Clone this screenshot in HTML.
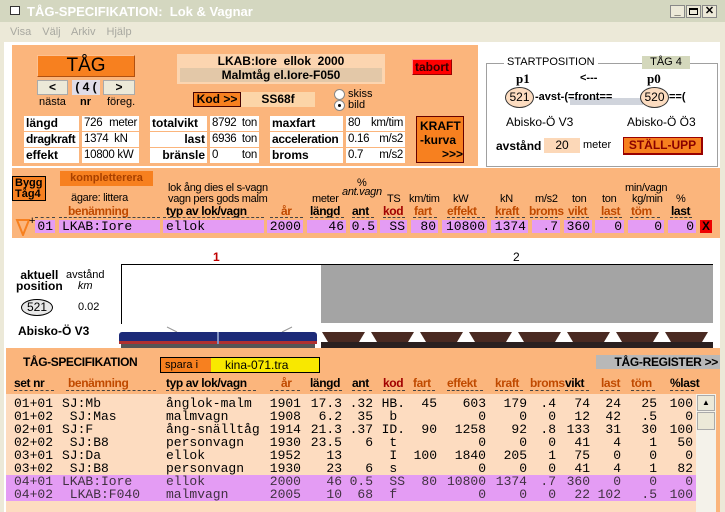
<!DOCTYPE html>
<html><head><meta charset="utf-8"><style>
*{margin:0;padding:0;box-sizing:border-box}
body{width:725px;height:512px;overflow:hidden;background:#fff;font-family:"Liberation Sans",sans-serif;font-size:12px;color:#000;position:relative}
.a{position:absolute;white-space:nowrap}
.b{font-weight:bold}
.cell{position:absolute;background:#fff;height:15px;line-height:15px;padding:0 2px;font-size:12px;white-space:nowrap;overflow:hidden;display:flex;justify-content:space-between}
.v{font-size:11.5px;letter-spacing:-0.3px}
.r{position:absolute;left:0;width:725px;height:13px;line-height:13px}
.r i{font-style:normal;position:absolute;top:0;font-family:"Liberation Mono",monospace;font-size:13px;white-space:pre}
.hd{position:absolute;top:376px;font-weight:bold;font-size:12px;letter-spacing:-0.4px}
.br{color:#c04a00}
.pc{position:absolute;top:220px;height:13px;line-height:13px;background:#e49cf4;font-family:"Liberation Mono",monospace;font-size:13px;text-align:right;padding-right:2px;white-space:pre}
.mh{position:absolute;font-size:11px;letter-spacing:-0.3px;white-space:nowrap}
.mb{position:absolute;top:204px;font-weight:bold;font-size:12px;letter-spacing:-0.4px;white-space:nowrap}
.dash{position:absolute;height:0;border-top:1px dashed #444}
</style></head><body>
<!-- title bar -->
<div class="a" style="left:0;top:0;width:725px;height:22px;background:#d4d7c0"></div>
<div class="a" style="left:10px;top:6px;width:10px;height:9px;border:1px solid #333;background:#fff"></div>
<div class="a b" style="left:27px;top:4px;font-size:13px;color:#fff">TÅG-SPECIFIKATION:&nbsp; Lok &amp; Vagnar</div>
<div class="a b" style="left:670px;top:5px;width:15px;height:13px;background:#ece9d8;border:1px solid #888;font-size:11px;line-height:11px;text-align:center">_</div>
<div class="a" style="left:686px;top:5px;width:15px;height:13px;background:#ece9d8;border:1px solid #888"><div style="margin:2px;width:9px;height:7px;border:1px solid #000;border-top-width:2px"></div></div>
<div class="a b" style="left:702px;top:5px;width:15px;height:13px;background:#ece9d8;border:1px solid #888;font-size:11px;line-height:11px;text-align:center">✕</div>
<!-- menu -->
<div class="a" style="left:0;top:22px;width:725px;height:20px;background:#ece9d8"></div>
<div class="a" style="left:10px;top:26px;color:#a8a8a0;font-size:11px;word-spacing:8px">Visa Välj Arkiv Hjälp</div>
<div class="a" style="left:0;top:42px;width:4px;height:470px;background:#ece9d8"></div>
<div class="a" style="left:720px;top:42px;width:5px;height:470px;background:#ece9d8"></div>

<!-- top orange panel -->
<div class="a" style="left:12px;top:45px;width:466px;height:121px;background:#fbb57c"></div>
<div class="a" style="left:37px;top:55px;width:98px;height:22px;background:#f7801f;border:1px solid #b05010;border-top-color:#fdc090;border-left-color:#fdc090;font-size:19px;line-height:20px;text-align:center">TÅG</div>
<div class="a b" style="left:37px;top:80px;width:31px;height:15px;background:#ece9d8;border:1px solid #aaa;text-align:center;line-height:13px">&lt;</div>
<div class="a b" style="left:72px;top:80px;width:28px;height:15px;background:#e0dde8;text-align:center;line-height:15px">( 4 (</div>
<div class="a b" style="left:103px;top:80px;width:32px;height:15px;background:#ece9d8;border:1px solid #aaa;text-align:center;line-height:13px">&gt;</div>
<div class="a" style="left:39px;top:96px;font-size:11px">nästa</div>
<div class="a b" style="left:80px;top:96px;font-size:11px">nr</div>
<div class="a" style="left:107px;top:96px;font-size:11px">föreg.</div>

<div class="a" style="left:177px;top:54px;width:208px;height:30px;background:#fcd5b0"></div>
<div class="a b" style="left:177px;top:54px;width:208px;text-align:center;font-size:12px">LKAB:Iore&nbsp; ellok&nbsp; 2000</div>
<div class="a b" style="left:180px;top:68px;width:202px;height:14px;background:#e3c8a8;text-align:center;font-size:12px;line-height:14px">Malmtåg el.Iore-F050</div>
<div class="a b" style="left:412px;top:59px;width:40px;height:16px;background:#f00;border:1px solid #900;border-top-color:#f88;border-left-color:#f88;font-size:12px;line-height:14px;text-align:center;color:#300">tabort</div>
<div class="a b" style="left:193px;top:92px;width:48px;height:15px;background:#f7801f;border:1px solid #400;line-height:13px;text-align:center">Kod &gt;&gt;</div>
<div class="a b" style="left:241px;top:92px;width:74px;height:15px;background:#fcd5a8;line-height:15px;text-align:center">SS68f</div>
<div class="a" style="left:334px;top:89px;width:11px;height:11px;border-radius:50%;background:#fff;border:1px solid #888"></div>
<div class="a" style="left:334px;top:100px;width:11px;height:11px;border-radius:50%;background:#fff;border:1px solid #888"><div style="margin:3px;width:3px;height:3px;background:#000;border-radius:50%"></div></div>
<div class="a" style="left:348px;top:88px;font-size:11px">skiss</div>
<div class="a" style="left:348px;top:99px;font-size:11px">bild</div>

<div class="cell b" style="left:24px;top:116px;width:55px">längd</div>
<div class="cell v" style="left:82px;top:116px;width:57px"><span>726</span><span>meter</span></div>
<div class="cell b" style="left:150px;top:116px;width:57px">totalvikt</div>
<div class="cell v" style="left:210px;top:116px;width:49px"><span>8792</span><span>ton</span></div>
<div class="cell b" style="left:270px;top:116px;width:73px">maxfart</div>
<div class="cell v" style="left:346px;top:116px;width:59px"><span>80</span><span>km/tim</span></div>
<div class="cell b" style="left:24px;top:132px;width:55px;letter-spacing:-0.3px">dragkraft</div>
<div class="cell v" style="left:82px;top:132px;width:57px"><span>1374&nbsp; kN</span></div>
<div class="cell b" style="left:150px;top:132px;width:57px;justify-content:flex-end">last</div>
<div class="cell v" style="left:210px;top:132px;width:49px"><span>6936</span><span>ton</span></div>
<div class="cell b" style="left:270px;top:132px;width:73px;letter-spacing:-0.3px">acceleration</div>
<div class="cell v" style="left:346px;top:132px;width:59px"><span>0.16</span><span>m/s2</span></div>
<div class="cell b" style="left:24px;top:148px;width:55px">effekt</div>
<div class="cell v" style="left:82px;top:148px;width:57px"><span>10800 kW</span></div>
<div class="cell b" style="left:150px;top:148px;width:57px;justify-content:flex-end">bränsle</div>
<div class="cell v" style="left:210px;top:148px;width:49px"><span>0</span><span>ton</span></div>
<div class="cell b" style="left:270px;top:148px;width:73px">broms</div>
<div class="cell v" style="left:346px;top:148px;width:59px"><span>0.7</span><span>m/s2</span></div>
<div class="a b" style="left:416px;top:116px;width:48px;height:47px;background:#f7801f;border:1px solid #600;font-size:12px;line-height:14px;padding:2px 0 0 3px">KRAFT<br>-kurva<br><span style="padding-left:22px">&gt;&gt;&gt;</span></div>

<!-- startposition -->
<div class="a" style="left:486px;top:63px;width:232px;height:104px;border:1px solid #a0a0a0"></div>
<div class="a" style="left:504px;top:56px;background:#fff;padding:0 3px;font-size:11px">STARTPOSITION</div>
<div class="a" style="left:642px;top:56px;width:48px;height:13px;background:#d4d8bc;font-size:11px;text-align:center;line-height:13px">TÅG 4</div>
<div class="a b" style="left:516px;top:71px;font-family:'Liberation Serif',serif;font-size:13px">p1</div>
<div class="a b" style="left:580px;top:72px;font-size:11px">&lt;---</div>
<div class="a b" style="left:647px;top:71px;font-family:'Liberation Serif',serif;font-size:13px">p0</div>
<div class="a" style="left:570px;top:98px;width:73px;height:7px;background:#d0d4dc"></div>
<div class="a" style="left:505px;top:87px;width:29px;height:21px;border-radius:50%;background:#fcdcc0;border:1px solid #333;text-align:center;line-height:19px;font-size:12px">521</div>
<div class="a b" style="left:535px;top:91px;font-size:11px">-avst-(=front==</div>
<div class="a" style="left:640px;top:87px;width:29px;height:21px;border-radius:50%;background:#fcdcc0;border:1px solid #333;text-align:center;line-height:19px;font-size:12px">520</div>
<div class="a b" style="left:669px;top:91px;font-size:11px">==(</div>
<div class="a" style="left:506px;top:115px;font-size:12px">Abisko-Ö V3</div>
<div class="a" style="left:627px;top:115px;font-size:12px">Abisko-Ö Ö3</div>
<div class="a b" style="left:496px;top:139px;font-size:12px">avstånd</div>
<div class="a" style="left:544px;top:138px;width:36px;height:15px;background:#fcd8b8;text-align:center;line-height:15px">20</div>
<div class="a" style="left:583px;top:139px;font-size:11px">meter</div>
<div class="a b" style="left:623px;top:137px;width:80px;height:18px;background:#f7801f;border:1px solid #900;border-right-width:2px;border-bottom-width:2px;text-align:center;line-height:15px;color:#800;font-size:12px">STÄLL-UPP</div>

<!-- middle band -->
<div class="a" style="left:12px;top:168px;width:708px;height:70px;background:#fbb57c"></div>
<div class="a b" style="left:12px;top:176px;width:34px;height:25px;background:#f7801f;border:1px solid #000;font-size:11px;line-height:11px;padding:1px 0 0 2px">Bygg<br>Tåg4</div>
<div class="a b" style="left:60px;top:171px;width:93px;height:15px;background:#f7801f;color:#a84000;text-align:center;font-size:11px;line-height:14px">kompletterera</div>
<div class="mh" style="left:71px;top:192px">ägare: littera</div>
<div class="mh" style="left:168px;top:182px">lok ång dies el s-vagn</div>
<div class="mh" style="left:168px;top:193px">vagn pers gods malm</div>
<div class="mh" style="left:312px;top:193px">meter</div>
<div class="mh" style="left:357px;top:177px">%</div>
<div class="mh" style="left:342px;top:186px;font-style:italic;width:43px;overflow:hidden">ant.vagn</div>
<div class="mh" style="left:387px;top:193px">TS</div>
<div class="mh" style="left:409px;top:193px">km/tim</div>
<div class="mh" style="left:453px;top:193px">kW</div>
<div class="mh" style="left:500px;top:193px">kN</div>
<div class="mh" style="left:535px;top:193px">m/s2</div>
<div class="mh" style="left:572px;top:193px">ton</div>
<div class="mh" style="left:602px;top:193px">ton</div>
<div class="mh" style="left:625px;top:182px">min/vagn</div>
<div class="mh" style="left:632px;top:193px">kg/min</div>
<div class="mh" style="left:676px;top:193px">%</div>
<div class="mb br" style="left:68px">benämning</div>
<div class="mb" style="left:166px">typ av lok/vagn</div>
<div class="mb br" style="left:281px">år</div>
<div class="mb" style="left:310px">längd</div>
<div class="mb" style="left:352px">ant</div>
<div class="mb" style="left:383px;color:#a00000">kod</div>
<div class="mb br" style="left:414px">fart</div>
<div class="mb br" style="left:447px">effekt</div>
<div class="mb br" style="left:495px">kraft</div>
<div class="mb br" style="left:529px">broms</div>
<div class="mb br" style="left:568px">vikt</div>
<div class="mb br" style="left:601px">last</div>
<div class="mb br" style="left:631px">töm</div>
<div class="mb" style="left:671px">last</div>
<div class="dash" style="left:35px;top:217px;width:20px"></div>
<div class="dash" style="left:59px;top:217px;width:101px"></div>
<div class="dash" style="left:163px;top:217px;width:101px"></div>
<div class="dash" style="left:270px;top:217px;width:33px"></div>
<div class="dash" style="left:310px;top:217px;width:34px"></div>
<div class="dash" style="left:352px;top:217px;width:22px"></div>
<div class="dash" style="left:383px;top:217px;width:22px"></div>
<div class="dash" style="left:413px;top:217px;width:24px"></div>
<div class="dash" style="left:447px;top:217px;width:38px"></div>
<div class="dash" style="left:495px;top:217px;width:30px"></div>
<div class="dash" style="left:530px;top:217px;width:28px"></div>
<div class="dash" style="left:567px;top:217px;width:22px"></div>
<div class="dash" style="left:600px;top:217px;width:22px"></div>
<div class="dash" style="left:630px;top:217px;width:30px"></div>
<div class="dash" style="left:670px;top:217px;width:22px"></div>
<svg class="a" style="left:15px;top:214px" width="20" height="22"><polygon points="2,6 14,6 8,21" fill="none" stroke="#f7801f" stroke-width="2"/><text x="14" y="10" font-size="11" font-family="Liberation Sans">+</text></svg>
<div class="pc" style="left:35px;width:20px">01</div>
<div class="pc" style="left:59px;width:101px;text-align:left;padding-left:3px">LKAB:Iore</div>
<div class="pc" style="left:163px;width:101px;text-align:left;padding-left:3px">ellok</div>
<div class="pc" style="left:267px;width:36px">2000</div>
<div class="pc" style="left:307px;width:39px">46</div>
<div class="pc" style="left:350px;width:27px">0.5</div>
<div class="pc" style="left:380px;width:27px">SS</div>
<div class="pc" style="left:411px;width:27px">80</div>
<div class="pc" style="left:442px;width:45px">10800</div>
<div class="pc" style="left:491px;width:37px">1374</div>
<div class="pc" style="left:532px;width:28px">.7</div>
<div class="pc" style="left:564px;width:28px">360</div>
<div class="pc" style="left:595px;width:29px">0</div>
<div class="pc" style="left:628px;width:36px">0</div>
<div class="pc" style="left:668px;width:28px">0</div>
<div class="a b" style="left:700px;top:220px;width:12px;height:13px;background:#e00;color:#000;font-size:12px;line-height:13px;text-align:center">X</div>

<!-- position area -->
<div class="a b" style="left:213px;top:250px;color:#c00000;font-size:12px">1</div>
<div class="a" style="left:513px;top:250px;font-size:12px">2</div>
<div class="a" style="left:507px;top:263px;font-size:12px">100</div>
<div class="a" style="left:121px;top:264px;width:592px;height:60px;border-top:1px solid #000;border-left:1px solid #000"></div>
<div class="a" style="left:321px;top:265px;width:392px;height:58px;background:#a4a4a4"></div>
<div class="a b" style="left:16px;top:270px;font-size:12px;line-height:11px;text-align:center">aktuell<br>position</div>
<div class="a" style="left:66px;top:270px;font-size:11px;line-height:11px;text-align:center">avstånd<br><i>km</i></div>
<div class="a" style="left:21px;top:299px;width:32px;height:17px;border-radius:50%;background:#e8e8e8;border:1px solid #000;text-align:center;line-height:15px;font-size:12px">521</div>
<div class="a" style="left:78px;top:301px;font-size:11px">0.02</div>
<div class="a b" style="left:18px;top:324px;font-size:12px">Abisko-Ö V3</div>
<svg class="a" style="left:117px;top:326px" width="600" height="23">
<line x1="50" y1="1" x2="60" y2="6" stroke="#999"/><line x1="175" y1="1" x2="165" y2="6" stroke="#999"/>
<rect x="2" y="6" width="198" height="12" rx="3" fill="#1c2a78"/>
<rect x="2" y="15" width="198" height="3" fill="#b03030"/>
<rect x="100" y="6" width="2" height="12" fill="#8090c0"/>
<rect x="4" y="18" width="194" height="4" fill="#555"/>
<g fill="#4a2a22">
<polygon points="205,6 248,6 242,16 211,16"/><polygon points="254,6 297,6 291,16 260,16"/><polygon points="303,6 346,6 340,16 309,16"/><polygon points="352,6 395,6 389,16 358,16"/><polygon points="401,6 444,6 438,16 407,16"/><polygon points="450,6 493,6 487,16 456,16"/><polygon points="499,6 542,6 536,16 505,16"/><polygon points="548,6 591,6 585,16 554,16"/>
</g>
<rect x="204" y="16" width="392" height="6" fill="#2a2020"/>
</svg>

<!-- bottom section -->
<div class="a" style="left:6px;top:348px;width:714px;height:164px;background:#fbb57c"></div>
<div class="a" style="left:6px;top:394px;width:690px;height:118px;background:#fddcc0"></div>
<div class="a b" style="left:23px;top:355px;font-size:12px;letter-spacing:-0.4px">TÅG-SPECIFIKATION</div>
<div class="a" style="left:160px;top:357px;width:160px;height:16px;border:1px solid #000;background:#f8e800"></div>
<div class="a" style="left:161px;top:358px;width:50px;height:14px;background:#f7801f;font-size:11px;line-height:14px;padding-left:4px">spara i</div>
<div class="a" style="left:225px;top:358px;font-size:12px;line-height:14px">kina-071.tra</div>
<div class="a b" style="left:596px;top:355px;width:124px;height:14px;background:#b8b8b8;font-size:12px;line-height:14px;text-align:right;padding-right:2px;letter-spacing:-0.3px">TÅG-REGISTER &gt;&gt;</div>
<div class="hd" style="left:14px">set nr</div>
<div class="hd br" style="left:68px">benämning</div>
<div class="hd" style="left:166px">typ av lok/vagn</div>
<div class="hd br" style="left:281px">år</div>
<div class="hd" style="left:310px">längd</div>
<div class="hd" style="left:352px">ant</div>
<div class="hd" style="left:383px;color:#a00000">kod</div>
<div class="hd br" style="left:413px">fart</div>
<div class="hd br" style="left:447px">effekt</div>
<div class="hd br" style="left:495px">kraft</div>
<div class="hd br" style="left:530px">broms</div>
<div class="hd" style="left:565px">vikt</div>
<div class="hd br" style="left:601px">last</div>
<div class="hd br" style="left:631px">töm</div>
<div class="hd" style="left:670px">%last</div>
<div class="dash" style="left:14px;top:390px;width:40px"></div>
<div class="dash" style="left:66px;top:390px;width:90px"></div>
<div class="dash" style="left:166px;top:390px;width:90px"></div>
<div class="dash" style="left:270px;top:390px;width:30px"></div>
<div class="dash" style="left:310px;top:390px;width:32px"></div>
<div class="dash" style="left:352px;top:390px;width:20px"></div>
<div class="dash" style="left:383px;top:390px;width:22px"></div>
<div class="dash" style="left:413px;top:390px;width:22px"></div>
<div class="dash" style="left:447px;top:390px;width:36px"></div>
<div class="dash" style="left:495px;top:390px;width:28px"></div>
<div class="dash" style="left:530px;top:390px;width:30px"></div>
<div class="dash" style="left:565px;top:390px;width:24px"></div>
<div class="dash" style="left:600px;top:390px;width:20px"></div>
<div class="dash" style="left:631px;top:390px;width:24px"></div>
<div class="dash" style="left:670px;top:390px;width:24px"></div>
<div class="a" style="left:6px;top:475px;width:690px;height:26px;background:#e49cf4"></div>
<style>
.c1{left:14px}.c2{left:62px}.c3{left:166px}
.c4{right:424px}.c5{right:383px}.c6{right:352px}.c7{right:320px}.c8{right:288px}.c9{right:239px}.c10{right:198px}.c11{right:169px}.c12{right:135px}.c13{right:104px}.c14{right:68px}.c15{right:32px}
</style>
<div class="r" style="top:397px"><i class="c1">01+01</i><i class="c2">SJ:Mb</i><i class="c3">ånglok-malm</i><i class="c4">1901</i><i class="c5">17.3</i><i class="c6">.32</i><i class="c7">HB.</i><i class="c8">45</i><i class="c9">603</i><i class="c10">179</i><i class="c11">.4</i><i class="c12">74</i><i class="c13">24</i><i class="c14">25</i><i class="c15">100</i></div>
<div class="r" style="top:410px"><i class="c1">01+02</i><i class="c2"> SJ:Mas</i><i class="c3">malmvagn</i><i class="c4">1908</i><i class="c5">6.2</i><i class="c6">35</i><i class="c7">b </i><i class="c9">0</i><i class="c10">0</i><i class="c11">0</i><i class="c12">12</i><i class="c13">42</i><i class="c14">.5</i><i class="c15">0</i></div>
<div class="r" style="top:423px"><i class="c1">02+01</i><i class="c2">SJ:F</i><i class="c3">ång-snälltåg</i><i class="c4">1914</i><i class="c5">21.3</i><i class="c6">.37</i><i class="c7">ID.</i><i class="c8">90</i><i class="c9">1258</i><i class="c10">92</i><i class="c11">.8</i><i class="c12">133</i><i class="c13">31</i><i class="c14">30</i><i class="c15">100</i></div>
<div class="r" style="top:436px"><i class="c1">02+02</i><i class="c2"> SJ:B8</i><i class="c3">personvagn</i><i class="c4">1930</i><i class="c5">23.5</i><i class="c6">6</i><i class="c7">t </i><i class="c9">0</i><i class="c10">0</i><i class="c11">0</i><i class="c12">41</i><i class="c13">4</i><i class="c14">1</i><i class="c15">50</i></div>
<div class="r" style="top:449px"><i class="c1">03+01</i><i class="c2">SJ:Da</i><i class="c3">ellok</i><i class="c4">1952</i><i class="c5">13</i><i class="c7">I </i><i class="c8">100</i><i class="c9">1840</i><i class="c10">205</i><i class="c11">1</i><i class="c12">75</i><i class="c13">0</i><i class="c14">0</i><i class="c15">0</i></div>
<div class="r" style="top:462px"><i class="c1">03+02</i><i class="c2"> SJ:B8</i><i class="c3">personvagn</i><i class="c4">1930</i><i class="c5">23</i><i class="c6">6</i><i class="c7">s </i><i class="c9">0</i><i class="c10">0</i><i class="c11">0</i><i class="c12">41</i><i class="c13">4</i><i class="c14">1</i><i class="c15">82</i></div>
<div class="r" style="top:475px;color:#403040"><i class="c1">04+01</i><i class="c2">LKAB:Iore</i><i class="c3">ellok</i><i class="c4">2000</i><i class="c5">46</i><i class="c6">0.5</i><i class="c7">SS</i><i class="c8">80</i><i class="c9">10800</i><i class="c10">1374</i><i class="c11">.7</i><i class="c12">360</i><i class="c13">0</i><i class="c14">0</i><i class="c15">0</i></div>
<div class="r" style="top:488px;color:#403040"><i class="c1">04+02</i><i class="c2"> LKAB:F040</i><i class="c3">malmvagn</i><i class="c4">2005</i><i class="c5">10</i><i class="c6">68</i><i class="c7">f </i><i class="c9">0</i><i class="c10">0</i><i class="c11">0</i><i class="c12">22</i><i class="c13">102</i><i class="c14">.5</i><i class="c15">100</i></div>
<!-- scrollbar -->
<div class="a" style="left:696px;top:394px;width:20px;height:118px;background:#f4f2ea"></div>
<div class="a" style="left:697px;top:395px;width:18px;height:16px;background:#ece9d8;border:1px solid #aaa;font-size:8px;text-align:center;line-height:14px">▲</div>
<div class="a" style="left:697px;top:412px;width:18px;height:18px;background:#ece9d8;border:1px solid #aaa"></div>
</body></html>
